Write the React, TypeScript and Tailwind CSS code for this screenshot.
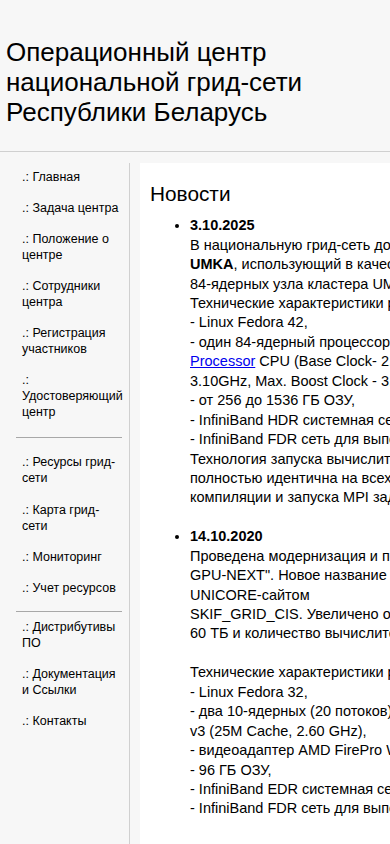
const menuTop = [
  'Главная',
  'Задача центра',
  'Положение о центре',
  'Сотрудники центра',
  'Регистрация участников',
];

const menuMid = ['Ресурсы грид-сети', 'Карта грид-сети', 'Мониторинг', 'Учет ресурсов'];

const menuBottom = ['Дистрибутивы ПО', 'Документация и Ссылки', 'Контакты'];

function MenuItem({ label }: { label: string }) {
  return (
    <li>
      <a href="#" className="block w-[100px] text-black">
        .: {label}
      </a>
    </li>
  );
}

export default function App() {
  return (
    <div className="min-h-screen w-full overflow-hidden bg-[#f7f7f7] font-['Liberation_Sans',Arial,sans-serif] text-black">
      {/* Шапка */}
      <header className="border-b border-[#d0d0d0] px-[6px] pt-[37px] pb-[24px]">
        <h1 className="text-[26px] leading-[30px] font-normal">
          Операционный центр
          <br />
          национальной грид-сети
          <br />
          Республики Беларусь
        </h1>
      </header>

      <div className="mt-[11px] flex items-stretch">
        {/* Меню */}
        <nav className="w-[130px] shrink-0 border-r border-[#d0d0d0] pt-[6px] text-[12.5px] leading-[16px]">
          <ul className="flex flex-col gap-[15.1px] pl-[22px]">
            {menuTop.map((m) => (
              <MenuItem key={m} label={m} />
            ))}
            <li>
              <a href="#" className="block w-[100px] text-black">
                .: Удостоверяющий центр
              </a>
            </li>
          </ul>
          <hr className="mt-[17px] mr-[7px] ml-[16px] border-0 border-t border-[#a8a8a8]" />
          <ul className="mt-[16px] flex flex-col gap-[15.1px] pl-[22px]">
            {menuMid.map((m) => (
              <MenuItem key={m} label={m} />
            ))}
          </ul>
          <hr className="mt-[15px] mr-[7px] ml-[16px] border-0 border-t border-[#a8a8a8]" />
          <ul className="mt-[7px] flex flex-col gap-[15.1px] pl-[22px]">
            {menuBottom.map((m) => (
              <MenuItem key={m} label={m} />
            ))}
          </ul>
        </nav>

        {/* Новости */}
        <main className="ml-[10px] w-[600px] shrink-0 bg-white px-[10px] pt-[19px] pb-[20px]">
          <h2 className="text-[20.8px] leading-[24px] font-normal">Новости</h2>
          <ul className="mt-[10.3px] list-disc pl-[40px] text-[14.5px] leading-[19.43px] whitespace-nowrap">
            <li className="mb-[19.43px]">
              <b>3.10.2025</b>
              <br />
              В национальную грид-сеть добавлен новый вычислительный ресурс
              <br />
              <b>UMKA</b>, использующий в качестве вычислительных узлов два
              <br />
              84-ядерных узла кластера UMKA.
              <br />
              Технические характеристики ресурса:
              <br />
              - Linux Fedora 42,
              <br />
              - один 84-ядерный процессор{' '}
              <a href="#" className="text-[#0000ee] underline">
                AMD EPYC 9634 84-Core
                <br />
                Processor
              </a>{' '}
              CPU (Base Clock- 2.25GHz, All Core Boost Clock -
              <br />
              3.10GHz, Max. Boost Clock - 3.7GHz),
              <br />
              - от 256 до 1536 ГБ ОЗУ,
              <br />
              - InfiniBand HDR системная сеть,
              <br />
              - InfiniBand FDR сеть для выполнения вычислительных задач.
              <br />
              Технология запуска вычислительных задач на ресурсе
              <br />
              полностью идентична на всех ресурсах грид-сети. Примеры
              <br />
              компиляции и запуска MPI задач приведены в документации.
            </li>
            <li className="mb-[19.43px]">
              <b>14.10.2020</b>
              <br />
              Проведена модернизация и переименование ресурса "GRID-
              <br />
              GPU-NEXT". Новое название ресурса, доступного под
              <br />
              UNICORE-сайтом
              <br />
              SKIF_GRID_CIS. Увеличено общее дисковое пространство до
              <br />
              60 ТБ и количество вычислительных узлов.
              <br />
              <br />
              Технические характеристики ресурса:
              <br />
              - Linux Fedora 32,
              <br />
              - два 10-ядерных (20 потоков) процессора Intel Xeon E5-2660
              <br />
              v3 (25M Cache, 2.60 GHz),
              <br />
              - видеоадаптер AMD FirePro W9100,
              <br />
              - 96 ГБ ОЗУ,
              <br />
              - InfiniBand EDR системная сеть,
              <br />
              - InfiniBand FDR сеть для выполнения вычислительных задач.
            </li>
          </ul>
        </main>
      </div>
    </div>
  );
}
